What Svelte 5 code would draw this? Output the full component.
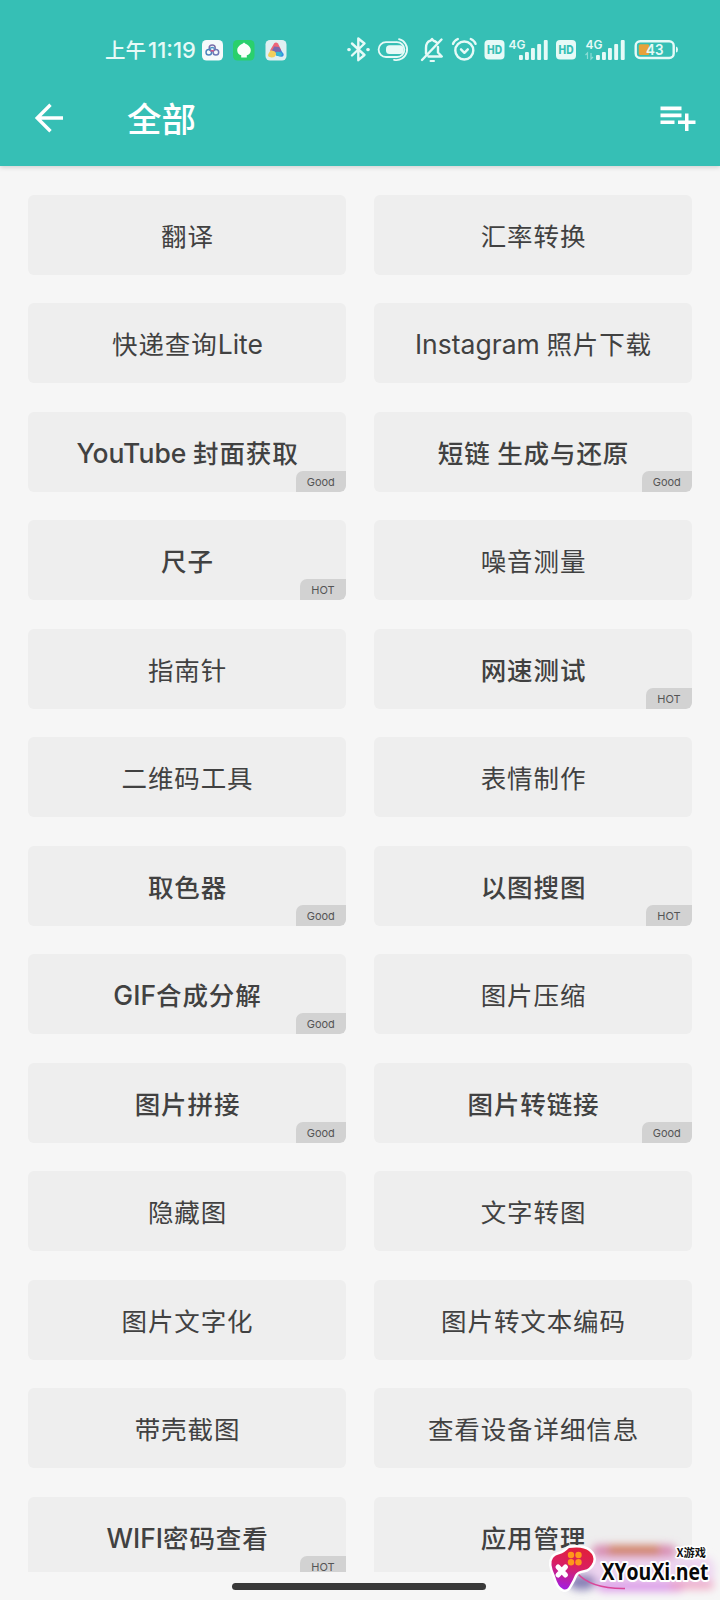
<script>
  const tools = [
    ['翻译'], ['汇率转换'],
    ['快递查询Lite'], ['Instagram 照片下载'],
    ['YouTube 封面获取', 'Good'], ['短链 生成与还原', 'Good'],
    ['尺子', 'HOT'], ['噪音测量'],
    ['指南针'], ['网速测试', 'HOT'],
    ['二维码工具'], ['表情制作'],
    ['取色器', 'Good'], ['以图搜图', 'HOT'],
    ['GIF合成分解', 'Good'], ['图片压缩'],
    ['图片拼接', 'Good'], ['图片转链接', 'Good'],
    ['隐藏图'], ['文字转图'],
    ['图片文字化'], ['图片转文本编码'],
    ['带壳截图'], ['查看设备详细信息'],
    ['WIFI密码查看', 'HOT'], ['应用管理', '', true]
  ];
  const bars = [[0, 5], [6, 8], [12, 12], [18.2, 16], [24.8, 20]];
  const parts = (name) => name.split(/([A-Za-z]+)/).filter(Boolean);
</script>

{#snippet hd(x)}
  <rect x={x} y="40" width="20" height="19.5" rx="4" fill="#e6faf7" />
  <text x={x + 10} y="54" text-anchor="middle" textLength="15" lengthAdjust="spacingAndGlyphs" class="hd">HD</text>
{/snippet}

{#snippet signal(x)}
  {#each bars as [dx, h]}
    <rect x={x + dx} y={60 - h} width="3.9" height={h} rx="1" fill="#e6faf7" />
  {/each}
{/snippet}

<div class="screen">
  <header>
    <div class="status">
      <div class="clock">上午<span>11:19</span></div>
      <svg class="apps" width="90" height="30" viewBox="200 34 90 30">
        <rect x="202" y="40" width="21" height="20.5" rx="4.5" fill="#f6fafb" />
        <g fill="none" stroke-width="1.5">
          <circle cx="212.2" cy="48" r="3" stroke="#7c6fa8" />
          <circle cx="208.8" cy="52.2" r="2.8" stroke="#4d84bd" />
          <circle cx="215.9" cy="52.2" r="2.8" stroke="#6c78b6" />
          <path d="M209.8 48.6a3 3 0 0 1 4.8 0" stroke="#4b91c5" />
          <path d="M210.5 50.8l3.4 0" stroke="#d65b87" />
        </g>
        <rect x="233" y="40" width="21.5" height="20.5" rx="4.5" fill="#2ad06c" />
        <path d="M244 42.5c1 1.6 6.8 2.8 6.8 7.8 0 3-2 4.8-4 5v2.2h-5.6v-2.2c-2.200-.2-4-2-4-5 0-5 5.800-6.200 6.800-7.800z" fill="#fbfffa" />
        <rect x="265.500" y="40" width="21" height="20.500" rx="4.500" fill="#dff0f2" />
        <path d="M274.200 43.200q2-1.500 3.800.3l3 6-6 5-5-4z" fill="#ef6378" />
        <path d="M272 50q4-4 8-1l3.500 4.800q.8 2.700-2 3l-5-1z" fill="#328ee0" />
        <path d="M274 46.500l5 .5 2.500 4-4 2.500-5-3z" fill="#7b67ae" />
        <path d="M270.500 50.500q5 0 5.600 3-.2 4-4.500 4-4.500-.3-3.300-3.400z" fill="#f2cf5c" />
        <path d="M276 52q4-1 6.500 2l-2 2.500-4-1z" fill="#35b8d1" />
      </svg>
      <svg class="system" width="338" height="30" viewBox="344 34 338 30">
        <g fill="none" stroke="#e6faf7" stroke-width="2.400" stroke-linejoin="round" stroke-linecap="round">
          <path d="M352 43.500l12.500 11.500-6.200 5.200V38.500l6.200 5L352 55.500" />
          <path d="M348.800 49.600h.4M367.800 49.600h.4" stroke-width="3.300" />
          <path d="M396.500 42.200H386a7.300 7.300 0 0 0 0 14.800h11a7.400 7.400 0 0 0 0-14.800" stroke-width="1.800" />
          <path d="M399 39.200a10.400 10.400 0 0 1-5 20.600" stroke-width="1.800" />
          <path d="M426 53.500V48q0-6 4.500-7.300l1.500-1.700 1.500 1.700q1.800.3 3 1.700M438 47v5.500l3.800 4h-13.300M422 60l19.500-20.500" />
          <path d="M430.500 61h3.500" stroke-width="2" />
          <circle cx="464.300" cy="50.500" r="9" stroke-width="2.400" />
          <path d="M461 49.300l3.400 3.500 3.400-3.500M453 43.800q1-3 4.800-4.800M470.800 39q3.800 1.800 4.800 4.800" />
        </g>
        <rect x="386" y="45.300" width="17.500" height="8.600" rx="3.500" fill="#e6faf7" />
        {@render hd(484.5)}
        <text x="508.500" y="48.500" textLength="17" lengthAdjust="spacingAndGlyphs" class="net">4G</text>
        {@render signal(519)}
        {@render hd(556)}
        <text x="585.500" y="48.500" textLength="17" lengthAdjust="spacingAndGlyphs" class="net">4G</text>
        <path d="M587.500 59v-6l-2 2M591 53v6l2-2" fill="none" stroke="#8cdcd5" stroke-width="1.200" />
        {@render signal(596)}
        <rect x="635.700" y="41.200" width="38" height="16.800" rx="4.500" fill="none" stroke="#e6faf7" stroke-width="2.400" />
        <path d="M676 46.500q2 .5 2 3t-2 3z" fill="#e6faf7" />
        <rect x="638.800" y="44.200" width="10.500" height="10.800" rx="1.500" fill="#e7a23b" />
        <text x="646" y="55" textLength="17.500" lengthAdjust="spacingAndGlyphs" class="charge">43</text>
      </svg>
    </div>
    <div class="toolbar">
      <svg class="back" width="30" height="30" viewBox="0 0 30 30" fill="none" stroke="#fff" stroke-width="3.400">
        <path d="M29 15H3.500M16.500 1.700L3.200 15l13.300 13.300" />
      </svg>
      <h1>全部</h1>
      <svg class="add" width="36" height="26" viewBox="0 0 36 26" fill="#fff">
        <path d="M.5.500h21v3.700H.5zM.5 7.500h21v3.700H.5zM.5 14.500h14v3.400H.5zM25 7.500h3.500v7H35.500V18h-7v7H25v-7h-7v-3.500h7z" />
      </svg>
    </div>
  </header>

  <main>
    {#each tools as [name, tag, strong]}
      <div class="card" class:strong={tag || strong}>
        <span class="name">{#each parts(name) as part}{#if /[A-Za-z]/.test(part)}<span class="latin">{part}</span>{:else}{part}{/if}{/each}</span>
        {#if tag}<span class="tag" class:hot={tag === 'HOT'}>{tag}</span>{/if}
      </div>
    {/each}
  </main>

  <footer><div class="handle"></div></footer>

  <svg class="mark" width="180" height="66" viewBox="540 1534 180 66">
    <defs>
      <linearGradient id="pad" x1="0.600" y1="0" x2="0.350" y2="1">
        <stop offset="0" stop-color="#e1203b" />
        <stop offset="0.450" stop-color="#d91f62" />
        <stop offset="1" stop-color="#a31ee0" />
      </linearGradient>
      <filter id="glow" x="-30%" y="-80%" width="160%" height="260%"><feGaussianBlur stdDeviation="4" /></filter>
    </defs>
    <g filter="url(#glow)">
      <rect x="592" y="1545" width="84" height="14" rx="6" fill="#d47aa9" opacity="0.850" />
      <rect x="608" y="1546" width="52" height="9" rx="3" fill="#cf7f45" opacity="0.850" />
      <rect x="584" y="1557" width="130" height="28" rx="10" fill="#ecd0ef" opacity="0.900" />
      <ellipse cx="582" cy="1582" rx="14" ry="8" fill="#6b61a5" opacity="0.800" />
      <rect x="598" y="1582" width="85" height="9" rx="4" fill="#d98fe8" opacity="0.950" />
      <rect x="670" y="1581" width="44" height="8" rx="4" fill="#ee91b4" opacity="0.750" />
    </g>
    <path d="M577 1573q14 16 48 15.500" fill="none" stroke="#d94799" stroke-width="1.600" />
    <path d="M569 1548q14-2 20 3 6 5 4 11-3 7-9 8-7 1-9 5-2 5-5 10-3 6-7 4-5-2-8-13-6-13-2-18 2-3 7-4 4-1 9-6z" fill="url(#pad)" stroke="#fff" stroke-width="5" stroke-linejoin="round" paint-order="stroke" />
    <path d="M558 1567l7.500 8M565.500 1567l-7.500 8" stroke="#fff" stroke-width="5" stroke-linecap="round" />
    <g fill="#ff971b">
      <circle cx="571" cy="1555" r="3.200" /><circle cx="578.500" cy="1555" r="3.200" />
      <circle cx="571" cy="1562.300" r="3.200" /><circle cx="578.500" cy="1562.300" r="3.200" />
    </g>
    <text x="601.500" y="1580" textLength="107" lengthAdjust="spacingAndGlyphs" class="site">XYouXi.net</text>
    <text x="676.500" y="1556.500" textLength="29.500" lengthAdjust="spacingAndGlyphs" class="brand">X游戏</text>
  </svg>
</div>

<style>
  :global(body) { margin: 0; }
  .screen {
    position: relative;
    display: flex;
    flex-direction: column;
    width: 720px;
    height: 1600px;
    overflow: hidden;
    background: #f6f6f6;
    font-family: "Noto Sans CJK SC", sans-serif;
    color: #414141;
  }
  header {
    box-sizing: border-box;
    flex: none;
    height: 166.300px;
    padding-top: 34px;
    background: #36bfb5;
    box-shadow: 0 1px 5px rgba(0, 0, 0, 0.180);
  }
  .status { display: flex; height: 30px; padding: 0 38px 0 105px; align-items: center; }
  .clock {
    display: flex;
    align-items: center;
    width: 95px;
    flex: none;
    white-space: nowrap;
    font-size: 20.500px;
    line-height: 30px;
    font-weight: 500;
    color: #e6faf7;
  }
  .clock span { font-family: Inter, sans-serif; font-size: 22px; letter-spacing: 0; margin: 1px 0 0 2px; }
  .system { margin-left: auto; }
  .hd { font: 800 11.500px Inter, sans-serif; fill: #36bfb5; }
  .net { font: 600 11.500px Inter, sans-serif; fill: #e6faf7; }
  .charge { font: 600 15px Inter, sans-serif; fill: #e6faf7; }
  .toolbar { display: flex; align-items: center; height: 106px; padding: 0 24px 0 34px; }
  .toolbar .back { margin-top: 1px; }
  .toolbar h1 {
    margin: -1px 0 0 63px;
    font-size: 34.500px;
    line-height: 40px;
    font-weight: 500;
    color: #fff;
  }
  .toolbar .add { margin: 4px 0 0 auto; }
  main {
    display: grid;
    grid-template-columns: 318px 318px;
    grid-auto-rows: 80px;
    gap: 28.500px 28px;
    box-sizing: border-box;
    flex: none;
    height: 1405.400px;
    padding: 28.400px 28px 0;
    overflow: hidden;
  }
  .card {
    position: relative;
    display: flex;
    align-items: center;
    justify-content: center;
    border-radius: 6px;
    background: #eee;
    overflow: hidden;
  }
  .name { padding-left: 1px; font-size: 25.500px; line-height: 36px; letter-spacing: 0.900px; white-space: nowrap; }
  .latin { font-family: Inter, sans-serif; font-size: 26.500px; line-height: 0; letter-spacing: 0; }
  .strong .name { font-weight: 500; }
  .tag {
    position: absolute;
    right: 0;
    bottom: 0;
    box-sizing: border-box;
    width: 50.500px;
    height: 21px;
    border-radius: 7px 0 6px 0;
    background: #d2d2d2;
    color: #555;
    font-family: Inter, sans-serif;
    font-size: 11px;
    line-height: 22px;
    text-align: center;
  }
  .tag.hot { width: 46px; }
  footer { display: flex; justify-content: center; padding: 11.500px 3px 0 0; }
  .handle { width: 254px; height: 6.500px; border-radius: 4px; background: #393939; }
  .mark { position: absolute; right: 0; bottom: 0; }
  .site { font: 700 23px "Open Sans", sans-serif; fill: #080808; stroke: #fff; stroke-width: 4px; paint-order: stroke; stroke-linejoin: round; }
  .brand { font: 700 11px "Noto Sans CJK SC", sans-serif; fill: #111; stroke: #fff; stroke-width: 3px; paint-order: stroke; stroke-linejoin: round; }
</style>
